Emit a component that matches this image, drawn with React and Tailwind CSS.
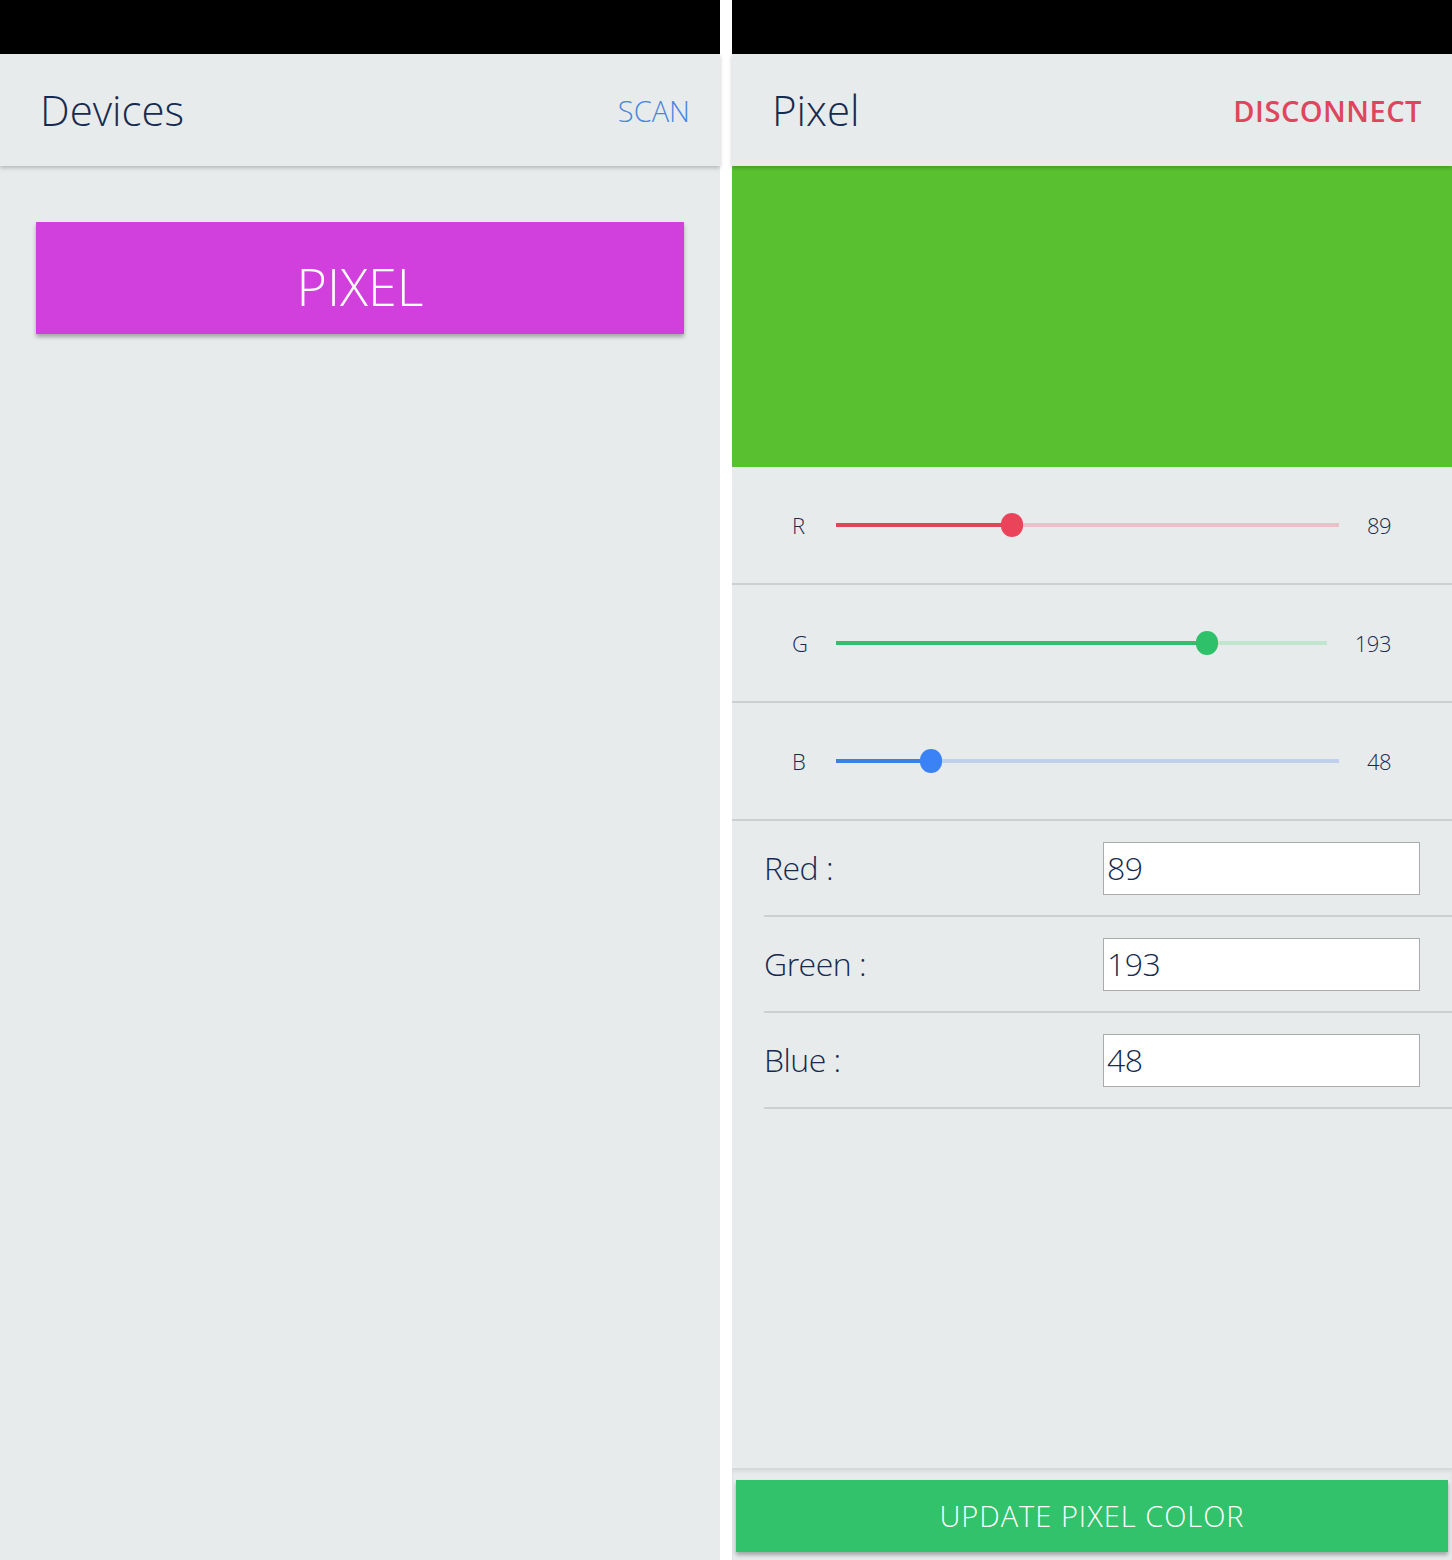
import { useState } from "react";

const font = { fontFamily: '"Open Sans", "Liberation Sans", sans-serif' };

function Header({ title, action, actionClass }) {
  return (
    <div className="relative z-10 h-[112px] flex items-center justify-between pl-[40px] pr-[30px] bg-[#e8ebec] shadow-[0_2px_4px_rgba(0,0,0,0.22)]">
      <span className="text-[42px] font-light text-[#172b50] leading-none">{title}</span>
      <span className={actionClass}>{action}</span>
    </div>
  );
}

function SliderRow({ label, value, fill, thumb, rest }) {
  const pct = (value / 255) * 100;
  return (
    <div className="h-[118px] flex items-center gap-[28px] pl-[60px] pr-[61px] border-b-2 border-[#cdd0d2]">
      <span className="text-[22px] font-light text-[#172b50] w-[16px]">{label}</span>
      <div className="relative flex-1 h-[4px]" style={{ background: rest }}>
        <div className="absolute left-0 top-0 h-full" style={{ width: pct + "%", background: fill }} />
        <div
          className="absolute top-1/2 w-[22px] h-[24px] rounded-full -translate-x-1/2 -translate-y-1/2"
          style={{ left: pct + "%", background: thumb }}
        />
      </div>
      <span className="text-[22px] font-light text-[#172b50] text-right tracking-[-0.5px]">{value}</span>
    </div>
  );
}

function InputRow({ label, value }) {
  return (
    <div className="h-[96px] flex items-center justify-between pr-[32px] border-b-2 border-[#cdd0d2]">
      <span className="text-[32px] font-light text-[#172b50] tracking-[-0.5px]">{label}</span>
      <div className="w-[317px] h-[53px] bg-white border border-[#a9abad] flex items-center px-[3px] text-[32px] font-light text-[#172b50] tracking-[-0.5px]">
        {value}
      </div>
    </div>
  );
}

export default function App() {
  const [rgb] = useState({ r: 89, g: 193, b: 48 });

  return (
    <div className="flex w-[1452px] h-[1560px] bg-white" style={font}>
      {/* devices screen */}
      <div className="w-[720px] h-full flex flex-col bg-[#e8ebec]">
        <div className="h-[54px] bg-black" />
        <Header
          title="Devices"
          action="SCAN"
          actionClass="text-[29px] font-light text-[#4a86dc] leading-none"
        />
        <div className="px-[36px] pt-[56px]">
          <button className="w-full h-[112px] pt-[16px] bg-[#d13fdd] text-white text-[52px] font-light shadow-[0_3px_4px_rgba(0,0,0,0.3)]">
            PIXEL
          </button>
        </div>
      </div>

      <div className="w-[12px]" />

      {/* pixel screen */}
      <div className="w-[720px] h-full flex flex-col bg-[#e8ebec]">
        <div className="h-[54px] bg-black" />
        <Header
          title="Pixel"
          action="DISCONNECT"
          actionClass="text-[29px] font-semibold text-[#e0455e] leading-none tracking-[0.5px]"
        />
        <div className="h-[301px]" style={{ background: `rgb(${rgb.r},${rgb.g},${rgb.b})` }} />
        <SliderRow label="R" value={rgb.r} fill="#e04558" thumb="#ea435a" rest="#e6c3c8" />
        <SliderRow label="G" value={rgb.g} fill="#35bc6c" thumb="#2fc06a" rest="#bfe6cf" />
        <SliderRow label="B" value={rgb.b} fill="#3d7ee8" thumb="#3a82f6" rest="#c0d0ea" />
        <div className="ml-[32px]">
          <InputRow label="Red :" value={rgb.r} />
          <InputRow label="Green :" value={rgb.g} />
          <InputRow label="Blue :" value={rgb.b} />
        </div>
        <div className="flex-1" />
        <div className="border-t-2 border-[#d6d9db] shadow-[inset_0_2px_3px_rgba(0,0,0,0.06)] pt-[10px] pb-[8px] px-[4px]">
          <button className="w-full h-[72px] bg-[#31c26b] text-white text-[29px] font-light tracking-[1px] shadow-[0_3px_4px_rgba(0,0,0,0.3)]">
            UPDATE PIXEL COLOR
          </button>
        </div>
      </div>
    </div>
  );
}
